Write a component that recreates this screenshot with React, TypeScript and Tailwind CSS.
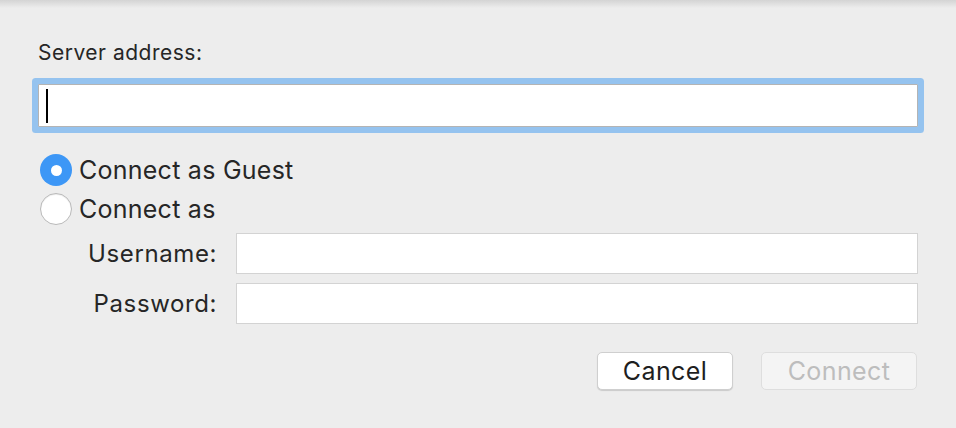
export default function App() {
  const font = { fontFamily: "Inter, 'Liberation Sans', sans-serif" };

  return (
    <div className="w-[956px] h-[428px] bg-[#ededed] text-[#262626] overflow-hidden" style={font}>
      {/* window title bar shadow */}
      <div className="h-[8px] bg-gradient-to-b from-[#d4d4d4] to-[#ededed]" />

      <div className="px-[38px] flex flex-col">
        <div className="mt-[33px] text-[21px] leading-[24px] tracking-[0.5px]">Server address:</div>

        {/* focused address field */}
        <div className="mt-[19px] h-[43px] bg-white border border-[#b4b4b4] rounded-[1px] shadow-[0_0_0_6px_#95c3ef] flex items-center pl-[7px]">
          <div className="w-[2px] h-[34px] bg-black" />
        </div>

        <div className="mt-[27px] flex flex-col gap-[7px] -ml-[1px] pl-[3px]">
          <label className="flex items-center gap-[7px] h-[32px]">
            <span className="w-[32px] h-[32px] rounded-full bg-[#3d97f6] flex items-center justify-center">
              <span className="w-[11px] h-[11px] rounded-full bg-white" />
            </span>
            <span className="text-[25px] leading-[32px] tracking-[0.25px]">Connect as Guest</span>
          </label>
          <label className="flex items-center gap-[7px] h-[32px]">
            <span className="w-[32px] h-[32px] rounded-full bg-white border border-[#b9b9b9] shadow-[inset_0_1px_1px_rgba(0,0,0,0.08)]" />
            <span className="text-[25px] leading-[32px] tracking-[0.25px]">Connect as</span>
          </label>
        </div>

        <div className="mt-[8px] flex flex-col gap-[9px]">
          <div className="flex items-center gap-[19px]">
            <span className="w-[179px] text-right text-[24px] leading-[41px] tracking-[0.6px]">Username:</span>
            <div className="flex-1 h-[41px] bg-white border border-[#d3d3d3]" />
          </div>
          <div className="flex items-center gap-[19px]">
            <span className="w-[179px] text-right text-[24px] leading-[41px] tracking-[0.6px]">Password:</span>
            <div className="flex-1 h-[41px] bg-white border border-[#d3d3d3]" />
          </div>
        </div>

        <div className="mt-[28px] flex justify-end gap-[28px] pr-[1px]">
          <button className="w-[136px] h-[38px] bg-white rounded-[5px] border border-[#cfcfcf] shadow-[0_1px_1px_rgba(0,0,0,0.15)] text-[25px] leading-[36px] tracking-[0.4px] text-[#1e1e1e]">
            Cancel
          </button>
          <button className="w-[156px] h-[38px] bg-[#f4f4f4] rounded-[5px] border border-[#dedede] text-[25px] leading-[36px] tracking-[0.4px] text-[#bdbdbd]">
            Connect
          </button>
        </div>
      </div>
    </div>
  );
}
